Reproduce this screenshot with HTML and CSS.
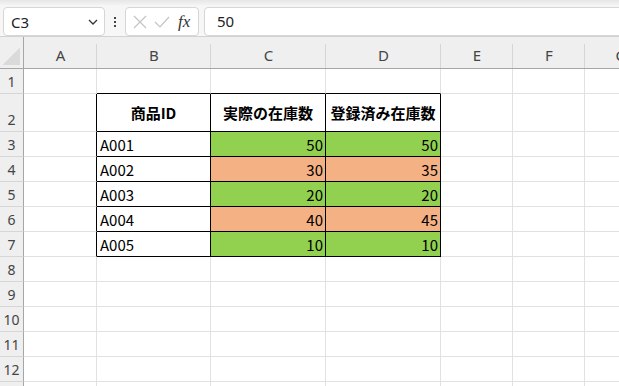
FILE: index.html
```html
<!DOCTYPE html>
<html lang="ja">
<head>
    <meta charset="UTF-8">
    <title>在庫シート</title>
    <link rel="stylesheet" href="styles.css">
</head>
<body>
    <div class="formula-bar">
        <div class="name-box">
            <span class="name-text">C3</span>
            <svg class="chevron" width="10" height="6" viewBox="0 0 10 6"><path d="M1 1 L5 5 L9 1" fill="none" stroke="#333" stroke-width="1.3"/></svg>
        </div>
        <div class="dots">
            <span></span><span></span><span></span>
        </div>
        <div class="fx-box">
            <svg width="14" height="14" viewBox="0 0 14 14"><path d="M1 1 L13 13 M13 1 L1 13" stroke="#c4c4c4" stroke-width="1.2"/></svg>
            <svg width="16" height="12" viewBox="0 0 16 12"><path d="M1 6 L6 11 L15 1" fill="none" stroke="#c4c4c4" stroke-width="1.2"/></svg>
            <span class="fx">fx</span>
        </div>
        <div class="formula-input">50</div>
    </div>

    <div class="sheet">
        <div class="corner"><div class="corner-tri"></div></div>
        <div class="col-head">A</div>
        <div class="col-head">B</div>
        <div class="col-head">C</div>
        <div class="col-head">D</div>
        <div class="col-head">E</div>
        <div class="col-head">F</div>
        <div class="col-head">G</div>

        <div class="row-head">1</div>
        <div class="cell"></div>
        <div class="cell tb"></div>
        <div class="cell tb"></div>
        <div class="cell tb"></div>
        <div class="cell"></div>
        <div class="cell"></div>
        <div class="cell"></div>

        <div class="row-head">2</div>
        <div class="cell tr"></div>
        <div class="cell t th">商品ID</div>
        <div class="cell t th">実際の在庫数</div>
        <div class="cell t th">登録済み在庫数</div>
        <div class="cell"></div>
        <div class="cell"></div>
        <div class="cell"></div>

        <div class="row-head">3</div>
        <div class="cell tr"></div>
        <div class="cell t">A001</div>
        <div class="cell t num ok">50</div>
        <div class="cell t num ok">50</div>
        <div class="cell"></div>
        <div class="cell"></div>
        <div class="cell"></div>

        <div class="row-head">4</div>
        <div class="cell tr"></div>
        <div class="cell t">A002</div>
        <div class="cell t num ng">30</div>
        <div class="cell t num ng">35</div>
        <div class="cell"></div>
        <div class="cell"></div>
        <div class="cell"></div>

        <div class="row-head">5</div>
        <div class="cell tr"></div>
        <div class="cell t">A003</div>
        <div class="cell t num ok">20</div>
        <div class="cell t num ok">20</div>
        <div class="cell"></div>
        <div class="cell"></div>
        <div class="cell"></div>

        <div class="row-head">6</div>
        <div class="cell tr"></div>
        <div class="cell t">A004</div>
        <div class="cell t num ng">40</div>
        <div class="cell t num ng">45</div>
        <div class="cell"></div>
        <div class="cell"></div>
        <div class="cell"></div>

        <div class="row-head">7</div>
        <div class="cell tr"></div>
        <div class="cell t">A005</div>
        <div class="cell t num ok">10</div>
        <div class="cell t num ok">10</div>
        <div class="cell"></div>
        <div class="cell"></div>
        <div class="cell"></div>

        <div class="row-head">8</div>
        <div class="cell"></div><div class="cell"></div><div class="cell"></div><div class="cell"></div><div class="cell"></div><div class="cell"></div><div class="cell"></div>
        <div class="row-head">9</div>
        <div class="cell"></div><div class="cell"></div><div class="cell"></div><div class="cell"></div><div class="cell"></div><div class="cell"></div><div class="cell"></div>
        <div class="row-head">10</div>
        <div class="cell"></div><div class="cell"></div><div class="cell"></div><div class="cell"></div><div class="cell"></div><div class="cell"></div><div class="cell"></div>
        <div class="row-head">11</div>
        <div class="cell"></div><div class="cell"></div><div class="cell"></div><div class="cell"></div><div class="cell"></div><div class="cell"></div><div class="cell"></div>
        <div class="row-head">12</div>
        <div class="cell"></div><div class="cell"></div><div class="cell"></div><div class="cell"></div><div class="cell"></div><div class="cell"></div><div class="cell"></div>
        <div class="row-head"></div>
        <div class="cell"></div><div class="cell"></div><div class="cell"></div><div class="cell"></div><div class="cell"></div><div class="cell"></div><div class="cell"></div>
    </div>
</body>
</html>
```

FILE: styles.css
```css
* {
    margin: 0;
    padding: 0;
    box-sizing: border-box;
}
html, body {
    width: 619px;
    height: 386px;
    overflow: hidden;
    background: #fff;
}
body {
    font-family: "Noto Sans", "Noto Sans CJK JP", sans-serif;
    color: #222;
}

/* 数式バー */
.formula-bar {
    display: flex;
    align-items: flex-start;
    height: 37px;
    padding: 7px 0 0 3px;
    border-bottom: 1px solid #d2d2d2;
    background: linear-gradient(#e6e6e6, #f6f6f6 6px, #f7f7f7);
    white-space: nowrap;
}
.formula-bar > * {
    flex-shrink: 0;
}
.name-box {
    display: flex;
    align-items: center;
    justify-content: space-between;
    width: 102px;
    height: 29px;
    padding: 0 6px 0 7px;
    background: #fff;
    border: 1px solid #d6d6d6;
    border-radius: 4px;
    font-size: 15px;
    color: #222;
}
.dots {
    display: flex;
    flex-direction: column;
    gap: 2px;
    width: 20px;
    padding: 10px 0 0 9px;
}
.dots span {
    width: 2px;
    height: 2px;
    background: #444;
}
.fx-box {
    display: flex;
    align-items: center;
    gap: 7px;
    width: 74px;
    height: 29px;
    padding: 0 6px 0 7px;
    background: #fff;
    border: 1px solid #d6d6d6;
    border-radius: 4px;
}
.fx {
    font-family: "Liberation Serif", serif;
    font-style: italic;
    font-size: 17px;
    color: #333;
    margin-left: 1px;
}
.formula-input {
    width: 440px;
    height: 29px;
    margin-left: 5px;
    padding: 3px 0 0 12px;
    background: #fff;
    border: 1px solid #d6d6d6;
    border-radius: 4px;
    font-size: 15px;
    color: #222;
}

/* シート */
.sheet {
    display: grid;
    grid-template-columns: 24px 73px 114px 115px 115px 72px 72px 72px;
    grid-template-rows: 32px 25px 38px;
    grid-auto-rows: 25px;
    width: 657px;
}
.corner {
    display: flex;
    align-items: flex-end;
    padding: 0 3px 3px 3px;
    background: #efefef;
    border-right: 1px solid #a6a6a6;
    border-bottom: 1px solid #a6a6a6;
}
.corner-tri {
    width: 17px;
    height: 17px;
    background: linear-gradient(135deg, transparent 50%, #dadada 50%);
}
.col-head {
    display: flex;
    align-items: center;
    justify-content: center;
    padding-top: 4px;
    background: linear-gradient(#d6d6d6, #d6d6d6) right bottom / 1px 24px no-repeat, #efefef;
    border-bottom: 1px solid #a6a6a6;
    font-size: 15px;
    color: #444;
}
.row-head {
    display: flex;
    align-items: flex-end;
    justify-content: center;
    padding-bottom: 2px;
    background: #efefef;
    border-right: 1px solid #a6a6a6;
    border-bottom: 1px solid #d6d6d6;
    font-size: 14px;
    color: #444;
}
.cell {
    display: flex;
    align-items: center;
    padding: 0 2px 0 3px;
    border-right: 1px solid #e1e1e1;
    border-bottom: 1px solid #e1e1e1;
    font-family: "Noto Sans CJK JP", sans-serif;
    font-size: 15px;
    color: #000;
    white-space: nowrap;
}
.cell.t {
    border-right-color: #000;
    border-bottom-color: #000;
}
.cell.tb {
    border-bottom-color: #000;
}
.cell.tr {
    border-right-color: #000;
}
.cell.th {
    justify-content: center;
    padding: 0;
    font-weight: bold;
}
.cell.num {
    justify-content: flex-end;
}
.cell.ok {
    background: #92d050;
}
.cell.ng {
    background: #f4b183;
}
```
